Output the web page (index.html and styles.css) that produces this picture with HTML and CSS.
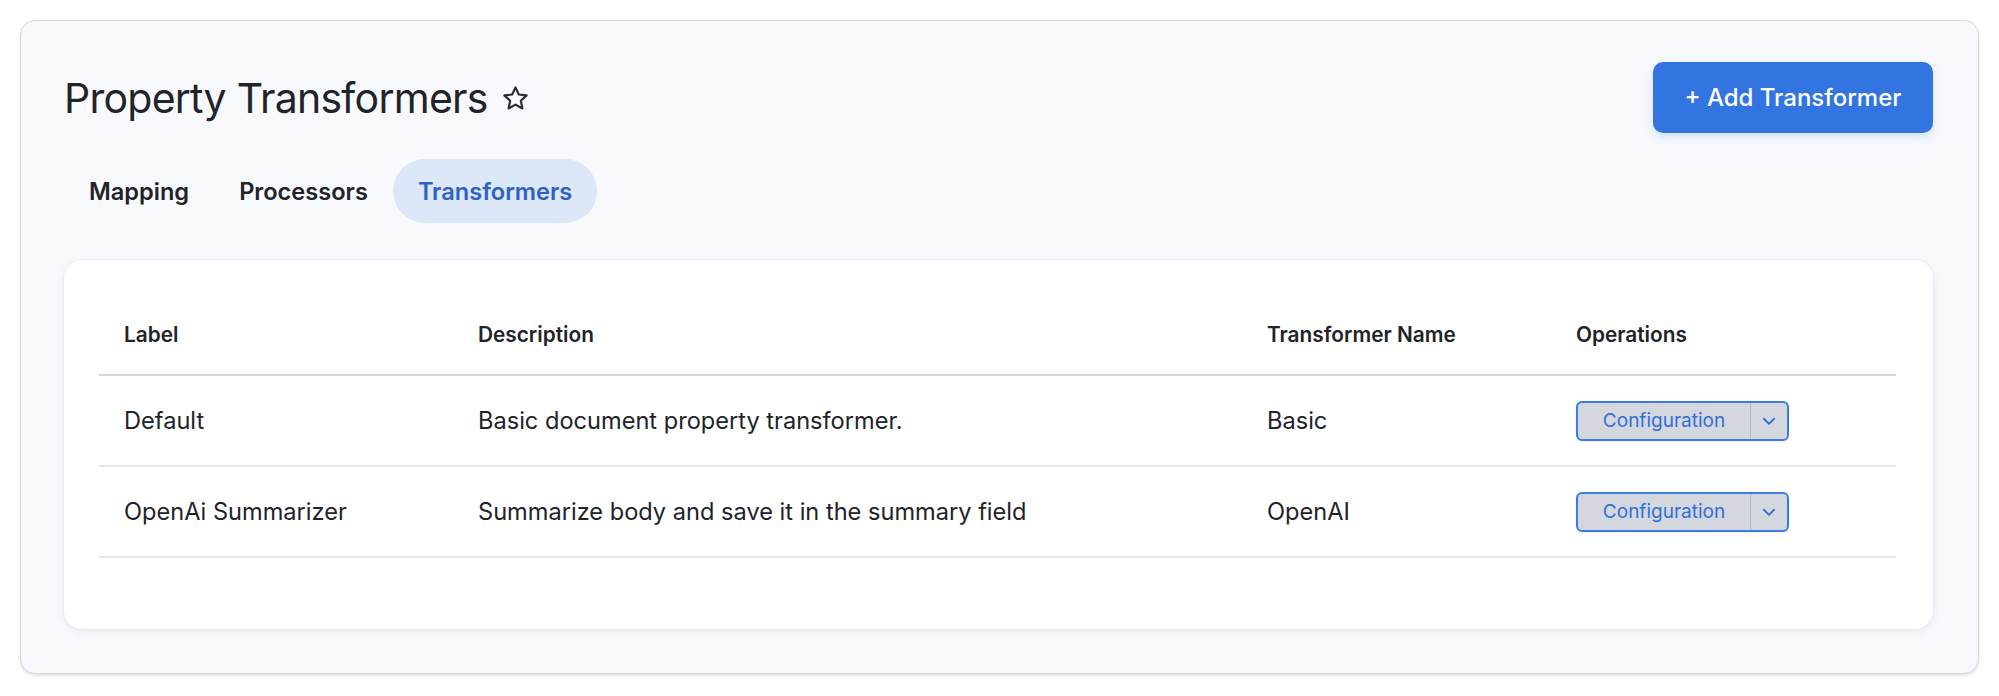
FILE: index.html
```html
<!DOCTYPE html>
<html lang="en">
<head>
<meta charset="utf-8">
<title>Property Transformers</title>
<link rel="stylesheet" href="styles.css">
</head>
<body>
<div class="page">
  <div class="header">
    <h1 class="title">Property Transformers
      <svg class="star" viewBox="0 0 24 24" width="29" height="29" aria-hidden="true"><path d="M12 2.8l2.75 5.9 6.45.75-4.78 4.4 1.28 6.37L12 17.05l-5.7 3.17 1.28-6.37L2.8 9.45l6.45-.75z" fill="none" stroke="#2c2d33" stroke-width="1.8" stroke-linejoin="round"/></svg>
    </h1>
    <button class="add-btn">+ Add Transformer</button>
  </div>
  <nav class="tabs">
    <a class="tab">Mapping</a>
    <a class="tab">Processors</a>
    <a class="tab active">Transformers</a>
  </nav>
  <div class="card">
    <table class="table">
      <colgroup>
        <col class="c1"><col class="c2"><col class="c3"><col class="c4">
      </colgroup>
      <thead>
        <tr><th>Label</th><th>Description</th><th>Transformer Name</th><th>Operations</th></tr>
      </thead>
      <tbody>
        <tr>
          <td>Default</td>
          <td>Basic document property transformer.</td>
          <td>Basic</td>
          <td><div class="split"><span class="split-main">Configuration</span><span class="split-arrow"><svg viewBox="0 0 16 16" width="18" height="18"><path d="M3.5 6l4.5 4.5L12.5 6" fill="none" stroke="#2f6fd6" stroke-width="1.6" stroke-linecap="round" stroke-linejoin="round"/></svg></span></div></td>
        </tr>
        <tr>
          <td>OpenAi Summarizer</td>
          <td>Summarize body and save it in the summary field</td>
          <td>OpenAI</td>
          <td><div class="split"><span class="split-main">Configuration</span><span class="split-arrow"><svg viewBox="0 0 16 16" width="18" height="18"><path d="M3.5 6l4.5 4.5L12.5 6" fill="none" stroke="#2f6fd6" stroke-width="1.6" stroke-linecap="round" stroke-linejoin="round"/></svg></span></div></td>
        </tr>
      </tbody>
    </table>
  </div>
</div>
</body>
</html>
```

FILE: styles.css
```css
* { box-sizing: border-box; }
html, body { margin: 0; padding: 0; background: #ffffff; }
body { font-family: Inter, "Noto Sans", sans-serif; color: #222329; }

.page {
  margin: 20px;
  height: 654px;
  border: 1px solid #d6d6db;
  border-radius: 15px;
  background: #f8f9fd;
  padding: 41px 45px 44px 43px;
  box-shadow: 0 2px 3px rgba(0,0,0,0.10);
}

.header {
  display: flex;
  justify-content: space-between;
  align-items: center;
  height: 71px;
}

.title {
  margin: 0;
  font-size: 41px;
  font-weight: 400;
  letter-spacing: -0.75px;
  color: #222329;
  display: flex;
  align-items: center;
  gap: 13px;
}
.star { display: block; margin-top: 2px; }

.add-btn {
  height: 71px;
  width: 280px;
  border: 0;
  border-radius: 10px;
  background: #3375e0;
  color: #ffffff;
  font-family: Inter, sans-serif;
  font-size: 24px;
  font-weight: 500;
  box-shadow: 0 4px 10px rgba(51,117,224,0.18);
}

.tabs {
  display: flex;
  margin-top: 26px;
  margin-left: 0;
}
.tab {
  height: 64px;
  display: flex;
  align-items: center;
  padding: 0 25px;
  border-radius: 32px;
  font-size: 23.6px;
  font-weight: 600;
  color: #222329;
}
.tab.active {
  background: #dce7f8;
  color: #2d62c2;
}

.card {
  margin-top: 37px;
  height: 369px;
  background: #ffffff;
  border-radius: 18px;
  padding: 35px 37px 0 35px;
  box-shadow: 0 2px 8px rgba(30,40,80,0.08), 0 0 0 1px rgba(30,40,80,0.03);
}

.table {
  width: 100%;
  border-collapse: collapse;
  table-layout: fixed;
}
.c1 { width: 354px; }
.c2 { width: 789px; }
.c3 { width: 309px; }

.table th {
  height: 80px;
  text-align: left;
  font-size: 20.8px;
  font-weight: 600;
  padding: 0 25px;
  border-bottom: 2px solid #d6d6db;
  color: #222329;
}
.table td {
  height: 91px;
  font-size: 23.6px;
  padding: 0 25px;
  border-bottom: 2px solid #e6e6e8;
  color: #222329;
}

.split {
  display: inline-flex;
  height: 40px;
  border: 2px solid #3b7be6;
  border-radius: 6px;
  background: #d5d7de;
  overflow: hidden;
  box-shadow: 0 1px 2px rgba(0,0,0,0.08);
}
.split-main {
  width: 173px;
  display: flex;
  align-items: center;
  justify-content: center;
  font-size: 19px;
  color: #2f6fd6;
  border-right: 1px solid #aebad0;
}
.split-arrow {
  width: 36px;
  display: flex;
  align-items: center;
  justify-content: center;
}
```
